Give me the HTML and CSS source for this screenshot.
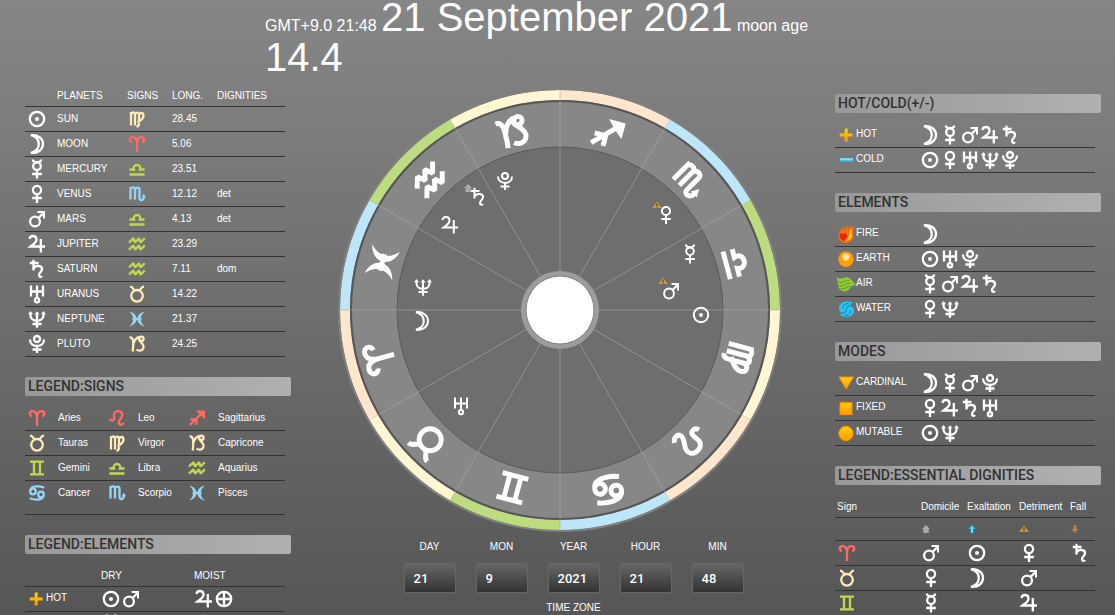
FILE: index.html
```html
<!DOCTYPE html>
<html lang="en">

<head>
  <meta charset="UTF-8" />
  <title>Horoscope</title>
  <link rel="stylesheet" href="styles.css">
</head>

<body>
  <!-- glyphs -->
  <svg class="defs" aria-hidden="true">
    <defs>
      <linearGradient id="gold" x1="0" y1="0" x2="0" y2="1">
        <stop offset="0" stop-color="#ffd000" />
        <stop offset="1" stop-color="#ff9a00" />
      </linearGradient>
    </defs>
    <symbol id="sun" viewBox="0 0 20 20"><circle cx="10" cy="10" r="7.2" /><circle class="solid" cx="10" cy="10" r="2" /></symbol>
    <symbol id="moon" viewBox="0 0 20 20"><path d="M4 1.2C11 .5 16 4.5 16 10S11 19.5 4 18.8C8.5 17.5 11.8 14.5 11.8 10S8.5 2.5 4 1.2Z" /></symbol>
    <symbol id="mercury" viewBox="0 0 20 20"><path d="M5.8 .5C6 4.2 14 4.2 14.2 .5M10 11V19.5M5.2 15H14.8" /><circle cx="10" cy="7.2" r="3.8" /></symbol>
    <symbol id="venus" viewBox="0 0 20 20"><circle cx="10" cy="6" r="4.1" /><path d="M10 10V19M5.2 14H14.8" /></symbol>
    <symbol id="mars" viewBox="0 0 20 20"><circle cx="8" cy="12.5" r="4.9" /><path d="M11.5 9L16 4.5" /><path class="solid" d="M10.5 2H18V9.5H16V5.5L14.5 4H10.5Z" /></symbol>
    <symbol id="jupiter" viewBox="0 0 20 20"><path d="M2.5 5C3 .8 9.5 1 9.5 5.5C9.5 9 6 10.500 3.5 12.5H18M13.8 5V18.5" /></symbol>
    <symbol id="saturn" viewBox="0 0 20 20"><path d="M6.5 .8V11.5M2.8 4H11.5M6.5 9.5C9 5.5 15.5 6.5 15 10.5C14.7 13 12 13.5 12 16C12 18.3 14.2 18.3 14.7 16.8" /></symbol>
    <symbol id="uranus" viewBox="0 0 20 20"><path d="M4 1.5V12.5M16 1.5V12.5M4 7.5H16M10 1.5V14" /><circle cx="10" cy="16.2" r="2.1" /></symbol>
    <symbol id="neptune" viewBox="0 0 20 20"><path d="M3.5 4V6.5C3.5 13.5 16.5 13.5 16.5 6.5V4M10 3.5V18.8M5.5 15H14.5" /><path class="solid" d="M1 5.2L3.5 2L6 5.200ZM7.5 5.500L10 2.300L12.5 5.500ZM14 5.200L16.5 2L19 5.200Z" /></symbol>
    <symbol id="pluto" viewBox="0 0 20 20"><circle cx="10" cy="5" r="3" /><path d="M3 5.5C3 14 17 14 17 5.5M10 12V19M5.5 15.5H14.5" /></symbol>
    <symbol id="earth" viewBox="0 0 20 20"><circle cx="10" cy="10" r="7.2" /><path d="M10 3V17M3 10H17" /></symbol>

    <symbol id="aries" viewBox="0 0 20 20"><path d="M5 8C1.8 7.5 2.2 3.2 5.500 3.2C9 3.2 10 6.5 10 10V18M10 10C10 6.5 11 3.2 14.5 3.2C17.8 3.2 18.2 7.5 15 8" /></symbol>
    <symbol id="taurus" viewBox="0 0 20 20"><circle cx="10" cy="11.8" r="5.8" /><path d="M3 2.6C5.8 2.6 5.600 5.200 8 6.200M17 2.6C14.2 2.6 14.400 5.200 12 6.200" /></symbol>
    <symbol id="gemini" viewBox="0 0 20 20"><path d="M3 3.6H17M3 16.4H17M7 4V16M13 4V16" /></symbol>
    <symbol id="cancer" viewBox="0 0 20 20"><circle cx="6" cy="8.5" r="2.8" /><circle cx="14" cy="11.5" r="2.8" /><path d="M3.5 7C4.5 2.5 12.5 2.8 17.3 4.8M16.5 13C15.5 17.5 7.5 17.2 2.7 15.2" /></symbol>
    <symbol id="leo" viewBox="0 0 20 20"><path d="M2.800 10.500C3.500 13.500 7 13.200 7.200 10.500C7.400 9 6.300 7.500 7.300 5.200C9.300 1.800 16 3 15.200 7.500C14.600 10.500 11.500 12 11.800 14.800C12.200 17.500 15.500 17 16.800 14.800" /></symbol>
    <symbol id="virgo" viewBox="0 0 20 20"><path d="M4 3V16.5M4 5C5 2.8 8 3 8 5.5V16.5M8 5.5C9 2.8 12 3 12 5.5V14.5Q12 17.5 9.5 17.5M12 6C13 3 16.5 3.5 16.5 6.5C16.5 10 13 12 10.5 13.5" /></symbol>
    <symbol id="libra" viewBox="0 0 20 20"><path d="M2.5 10.5H7C4.800 4.500 15.200 4.500 13 10.500H17.5M2.5 15.500H17.5" /></symbol>
    <symbol id="scorpio" viewBox="0 0 20 20"><path d="M3.5 3V15.5M3.5 5C4.5 2.8 8 3 8 5.5V15.5M8 5.5C9 2.8 12.5 3 12.5 5.5V14C12.5 17.3 16.5 17 16.8 13" /><path class="solid" d="M16.8 9.5L19 13.5H14.6Z" /></symbol>
    <symbol id="sagittarius" viewBox="0 0 20 20"><path d="M3 17L14 6M3.500 11.500H9.500V17" /><path class="solid" d="M9 2.5H18V11L14.8 8.5L11.5 5.2Z" /></symbol>
    <symbol id="capricorn" viewBox="0 0 20 20"><path d="M2.5 3.5C6 3 7 6 5.7 17.5M5.9 12C7 6 9.5 3.5 12.5 2.9M12.5 3C9 6 17.5 9 16.5 13.5C15.6 17.3 11.5 17.3 9.5 15.5" /><circle cx="14.4" cy="4.8" r="2.2" /></symbol>
    <symbol id="aquarius" viewBox="0 0 20 20"><path stroke-linejoin="bevel" d="M2 8.500L6.500 4.200L8 8.500L12 4.200L13.500 8.500L17.800 4.200M2 15.700L6.500 11.400L8 15.700L12 11.400L13.500 15.700L17.800 11.400" /></symbol>
    <symbol id="pisces" viewBox="0 0 20 20"><path d="M5.5 10H14.500" /><path class="solid" d="M2.200 2.5C12 4.500 12 15.500 2.200 17.500C7.500 13 7.500 7 2.200 2.500ZM17.800 2.5C8 4.500 8 15.500 17.800 17.500C12.500 13 12.500 7 17.800 2.500Z" /></symbol>

    <symbol id="hot" viewBox="0 0 20 20"><path fill="url(#gold)" stroke="none" d="M8.7 3.5h3v5h5v3h-5v5h-3v-5h-5v-3h5z" /></symbol>
    <symbol id="cold" viewBox="0 0 20 20"><path fill="#37c8f5" stroke="none" d="M4 8.5h13v3H4z" /><path fill="#c8f4ff" stroke="none" d="M4 8.5h13v1H4z" /></symbol>
    <symbol id="fire" viewBox="0 0 20 20"><path fill="#f8690c" stroke="none" d="M5.5 2.5L8.5 5L11 1.5L12.5 4.5L19 1C16.5 4 18 7 17.5 11.5C17 16.5 14 19 10 19C5.5 19 2.5 16 2.5 12C2.5 8 5.5 7 5.5 2.5Z" /><path fill="#ec2307" stroke="none" d="M4 9.5H10L11.5 12L8.5 17C4.5 15.5 3.5 13 4 9.5Z" /><path fill="#ffc928" stroke="none" d="M16.5 4C12.5 7 13.5 10 12.5 13C11.5 15.5 9.5 16.5 8.5 17C13.5 17.5 16.5 14 16 10.5C15.7 8 15.5 6 16.5 4Z" /></symbol>
    <symbol id="ground" viewBox="0 0 20 20"><circle cx="10" cy="10.2" r="7.7" fill="#ff9c08" stroke="none" /><circle cx="10" cy="8" r="3.500" fill="#ffe9a8" stroke="#ffc83c" stroke-width="1" /></symbol>
    <symbol id="air" viewBox="0 0 20 20"><path fill="#8fcb38" stroke="none" d="M.5 3C5 7 8 2 12 3.5C16 5 17 8.5 20 11C17.5 11.5 17 10.5 15.5 12C13 18 7 19 3.5 15C1.5 12 2 7 .5 3Z" /><path fill="none" stroke="#5a9a24" stroke-width="1" d="M2 7.5C6.5 11 9 5.5 13 6.5M2.5 11C7 14 10 8.5 14.5 9.5M4.5 14.8C9 16 11 12 14.5 12.5" /></symbol>
    <symbol id="water" viewBox="0 0 20 20"><path fill="#2cc2ef" stroke="none" d="M16.500 3.500C12 1.500 3 2.500 3 9.500C3 12 4.500 13.500 6 14C5.500 15 4.500 15.500 3.500 15.500C7 19 18 19.500 18 11.500C18 9 16.500 7.300 14.500 7C14.500 5.500 15 4.500 16.500 3.500Z" /><path fill="none" stroke="#0d83b8" stroke-width="1" d="M14.500 7C11.500 6.500 10.500 8 10.500 10.200S9 14.500 6 14M12.500 4.500C8.500 4.500 6.500 6.500 7 9.500M8.500 16.500C12.500 16.500 14.800 14.500 14.200 11.500" /></symbol>
    <symbol id="cardinal" viewBox="0 0 20 20"><path fill="url(#gold)" stroke="#ff8c00" stroke-width="1" d="M3 4H17.5L10.2 16Z" /></symbol>
    <symbol id="fixed" viewBox="0 0 20 20"><path fill="url(#gold)" stroke="#ff8c00" stroke-width="1" d="M4 4.5H16V16.5H4Z" /></symbol>
    <symbol id="mutable" viewBox="0 0 20 20"><circle cx="10" cy="10.5" r="7.2" fill="url(#gold)" stroke="#ff8c00" stroke-width="1" /></symbol>

    <symbol id="domicile" viewBox="0 0 10 10"><path fill="#aaa" stroke="none" d="M5 1L9 5H7.7V9H2.3V5H1Z" /></symbol>
    <symbol id="exaltation" viewBox="0 0 10 10"><path fill="#19c4ee" stroke="none" d="M5 1L8.7 5H6.3V9H3.7V5H1.3Z" /><path stroke="#c8f6ff" stroke-width="1" d="M5 3V8.5" /></symbol>
    <symbol id="detriment" viewBox="0 0 10 10"><path fill="#c8963c" stroke="none" d="M5 1.5L10 8H0Z" /><path stroke="#4c3a1c" stroke-width="1.2" d="M5 3.5V5.8M5 6.4V7.5" /></symbol>
    <symbol id="fall" viewBox="0 0 10 10"><path fill="#c97a3c" stroke="none" d="M5 9L1.3 5H3.7V1H6.3V5H8.7Z" /></symbol>
  </svg>

  <header class="title">
    <span class="small">GMT+9.0 21:48 </span>21 September 2021<span class="small"> moon age </span>14.4
  </header>

  <main class="page">
    <section class="side">
      <table class="planets">
        <thead>
          <tr><th class="c-icon"></th><th class="c-name">PLANETS</th><th class="c-sign">SIGNS</th><th class="c-long">LONG.</th><th>DIGNITIES</th></tr>
        </thead>
        <tbody>
          <tr><td><svg class="icon"><use href="#sun" /></svg></td><td>SUN</td><td><svg class="icon earthy"><use href="#virgo" /></svg></td><td>28.45</td><td></td></tr>
          <tr><td><svg class="icon"><use href="#moon" /></svg></td><td>MOON</td><td><svg class="icon fiery"><use href="#aries" /></svg></td><td>5.06</td><td></td></tr>
          <tr><td><svg class="icon"><use href="#mercury" /></svg></td><td>MERCURY</td><td><svg class="icon airy"><use href="#libra" /></svg></td><td>23.51</td><td></td></tr>
          <tr><td><svg class="icon"><use href="#venus" /></svg></td><td>VENUS</td><td><svg class="icon watery"><use href="#scorpio" /></svg></td><td>12.12</td><td>det</td></tr>
          <tr><td><svg class="icon"><use href="#mars" /></svg></td><td>MARS</td><td><svg class="icon airy"><use href="#libra" /></svg></td><td>4.13</td><td>det</td></tr>
          <tr><td><svg class="icon"><use href="#jupiter" /></svg></td><td>JUPITER</td><td><svg class="icon airy"><use href="#aquarius" /></svg></td><td>23.29</td><td></td></tr>
          <tr><td><svg class="icon"><use href="#saturn" /></svg></td><td>SATURN</td><td><svg class="icon airy"><use href="#aquarius" /></svg></td><td>7.11</td><td>dom</td></tr>
          <tr><td><svg class="icon"><use href="#uranus" /></svg></td><td>URANUS</td><td><svg class="icon earthy"><use href="#taurus" /></svg></td><td>14.22</td><td></td></tr>
          <tr><td><svg class="icon"><use href="#neptune" /></svg></td><td>NEPTUNE</td><td><svg class="icon watery"><use href="#pisces" /></svg></td><td>21.37</td><td></td></tr>
          <tr><td><svg class="icon"><use href="#pluto" /></svg></td><td>PLUTO</td><td><svg class="icon earthy"><use href="#capricorn" /></svg></td><td>24.25</td><td></td></tr>
        </tbody>
      </table>

      <h2>LEGEND:SIGNS</h2>
      <table class="signs">
        <tbody>
          <tr><td class="c-icon"><svg class="icon fiery"><use href="#aries" /></svg></td><td class="c-label">Aries</td><td class="c-icon"><svg class="icon fiery"><use href="#leo" /></svg></td><td class="c-label">Leo</td><td class="c-icon"><svg class="icon fiery"><use href="#sagittarius" /></svg></td><td>Sagittarius</td></tr>
          <tr><td><svg class="icon earthy"><use href="#taurus" /></svg></td><td>Tauras</td><td><svg class="icon earthy"><use href="#virgo" /></svg></td><td>Virgor</td><td><svg class="icon earthy"><use href="#capricorn" /></svg></td><td>Capricone</td></tr>
          <tr><td><svg class="icon airy"><use href="#gemini" /></svg></td><td>Gemini</td><td><svg class="icon airy"><use href="#libra" /></svg></td><td>Libra</td><td><svg class="icon airy"><use href="#aquarius" /></svg></td><td>Aquarius</td></tr>
          <tr class="last"><td><svg class="icon watery"><use href="#cancer" /></svg></td><td>Cancer</td><td><svg class="icon watery"><use href="#scorpio" /></svg></td><td>Scorpio</td><td><svg class="icon watery"><use href="#pisces" /></svg></td><td>Pisces</td></tr>
        </tbody>
      </table>

      <h2>LEGEND:ELEMENTS</h2>
      <table class="qualities">
        <thead>
          <tr><th class="c-kind"></th><th class="c-dry">DRY</th><th>MOIST</th></tr>
        </thead>
        <tbody>
          <tr><th><svg class="icon"><use href="#hot" /></svg>HOT</th><td><svg class="icon"><use href="#sun" /></svg><svg class="icon"><use href="#mars" /></svg></td><td><svg class="icon"><use href="#jupiter" /></svg><svg class="icon"><use href="#earth" /></svg></td></tr>
          <tr><th><svg class="icon"><use href="#cold" /></svg>COLD</th><td><svg class="icon"><use href="#mercury" /></svg><svg class="icon"><use href="#uranus" /></svg></td><td><svg class="icon"><use href="#venus" /></svg></td></tr>
        </tbody>
      </table>
    </section>

    <section class="center">
      <svg class="chart" viewBox="-222 -222 444 444" role="img" aria-label="Horoscope chart">
        <circle r="220.5" fill="#858585" />
        <g class="band">
          <circle r="215" pathLength="12" stroke="#fff7d4" stroke-dashoffset="0" />
          <circle r="215" pathLength="12" stroke="#ffe6cd" stroke-dashoffset="-1" />
          <circle r="215" pathLength="12" stroke="#bde7f9" stroke-dashoffset="-2" />
          <circle r="215" pathLength="12" stroke="#bcdc7f" stroke-dashoffset="-3" />
        </g>
        <circle class="halo" r="221" />
        <circle r="209" fill="#878787" stroke="#555" stroke-width="2" />
        <circle r="163" fill="#6e6e6e" stroke="#5a5a5a" />
        <path class="spokes" d="M0-39V-220M0 39V220M-39 0H-220M39 0H220M19.5-33.8L105-181.9M33.8-19.5L181.9-105M33.8 19.5L181.9 105M19.5 33.8L105 181.9M-19.5 33.8L-105 181.9M-33.8 19.5L-181.9 105M-33.8-19.5L-181.9-105M-19.5-33.8L-105-181.9" />
        <circle r="36.5" fill="#fff" stroke="#9c9c9c" stroke-width="5" />
        <circle r="34" fill="none" stroke="#808080" />
        <g class="zodiac">
          <use href="#libra" x="-19" y="-19" width="38" height="38" transform="rotate(75) translate(0 -183)" />
          <use href="#scorpio" x="-19" y="-19" width="38" height="38" transform="rotate(45) translate(0 -183)" />
          <use href="#sagittarius" x="-19" y="-19" width="38" height="38" transform="rotate(15) translate(0 -183)" />
          <use href="#capricorn" x="-19" y="-19" width="38" height="38" transform="rotate(-15) translate(0 -184)" />
          <use href="#aquarius" x="-19" y="-19" width="38" height="38" transform="rotate(-45) translate(0 -184)" />
          <use href="#pisces" x="-19" y="-19" width="38" height="38" transform="rotate(-75) translate(0 -184)" />
          <use href="#aries" x="-19" y="-19" width="38" height="38" transform="rotate(-105) translate(0 -187)" />
          <use href="#taurus" x="-19" y="-19" width="38" height="38" transform="rotate(-135) translate(0 -187)" />
          <use href="#gemini" x="-19" y="-19" width="38" height="38" transform="rotate(-165) translate(0 -184)" />
          <use href="#cancer" x="-19" y="-19" width="38" height="38" transform="rotate(165) translate(0 -186)" />
          <use href="#leo" x="-19" y="-19" width="38" height="38" transform="rotate(135) translate(0 -184)" />
          <use href="#virgo" x="-19" y="-19" width="38" height="38" transform="rotate(105) translate(0 -184)" />
        </g>
        <g class="bodies">
          <use href="#pluto" x="-65" y="-139" width="20" height="20" />
          <use href="#saturn" x="-92" y="-123" width="20" height="20" />
          <use href="#jupiter" x="-120" y="-95" width="20" height="20" />
          <use href="#neptune" x="-147" y="-33" width="20" height="20" />
          <use href="#moon" x="-148" y="1" width="20" height="20" />
          <use href="#uranus" x="-109" y="86" width="20" height="20" />
          <use href="#sun" x="131" y="-5" width="20" height="20" />
          <use href="#mars" x="101" y="-29" width="20" height="20" />
          <use href="#mercury" x="120" y="-66" width="20" height="20" />
          <use href="#venus" x="96" y="-105" width="20" height="20" />
          <use href="#domicile" x="-97" y="-127" width="10" height="10" />
          <use href="#detriment" x="92" y="-110" width="10" height="10" />
          <use href="#detriment" x="98" y="-34" width="10" height="10" />
        </g>
      </svg>

      <form class="date">
        <div class="fields">
          <label>DAY<input type="text" value="21"></label>
          <label>MON<input type="text" value="9"></label>
          <label>YEAR<input type="text" value="2021"></label>
          <label>HOUR<input type="text" value="21"></label>
          <label>MIN<input type="text" value="48"></label>
        </div>
        <label>TIME ZONE<select><option>+9.0</option></select></label>
      </form>
    </section>

    <section class="side right">
      <h2>HOT/COLD(+/-)</h2>
      <table class="groups">
        <tbody>
          <tr><th><svg class="icon"><use href="#hot" /></svg>HOT</th><td><svg class="icon"><use href="#moon" /></svg><svg class="icon"><use href="#mercury" /></svg><svg class="icon"><use href="#mars" /></svg><svg class="icon"><use href="#jupiter" /></svg><svg class="icon"><use href="#saturn" /></svg></td></tr>
          <tr><th><svg class="icon"><use href="#cold" /></svg>COLD</th><td><svg class="icon"><use href="#sun" /></svg><svg class="icon"><use href="#venus" /></svg><svg class="icon"><use href="#uranus" /></svg><svg class="icon"><use href="#neptune" /></svg><svg class="icon"><use href="#pluto" /></svg></td></tr>
        </tbody>
      </table>

      <h2>ELEMENTS</h2>
      <table class="groups">
        <tbody>
          <tr><th><svg class="icon"><use href="#fire" /></svg>FIRE</th><td><svg class="icon"><use href="#moon" /></svg></td></tr>
          <tr><th><svg class="icon"><use href="#ground" /></svg>EARTH</th><td><svg class="icon"><use href="#sun" /></svg><svg class="icon"><use href="#uranus" /></svg><svg class="icon"><use href="#pluto" /></svg></td></tr>
          <tr><th><svg class="icon"><use href="#air" /></svg>AIR</th><td><svg class="icon"><use href="#mercury" /></svg><svg class="icon"><use href="#mars" /></svg><svg class="icon"><use href="#jupiter" /></svg><svg class="icon"><use href="#saturn" /></svg></td></tr>
          <tr><th><svg class="icon"><use href="#water" /></svg>WATER</th><td><svg class="icon"><use href="#venus" /></svg><svg class="icon"><use href="#neptune" /></svg></td></tr>
        </tbody>
      </table>

      <h2>MODES</h2>
      <table class="groups">
        <tbody>
          <tr><th><svg class="icon"><use href="#cardinal" /></svg>CARDINAL</th><td><svg class="icon"><use href="#moon" /></svg><svg class="icon"><use href="#mercury" /></svg><svg class="icon"><use href="#mars" /></svg><svg class="icon"><use href="#pluto" /></svg></td></tr>
          <tr><th><svg class="icon"><use href="#fixed" /></svg>FIXED</th><td><svg class="icon"><use href="#venus" /></svg><svg class="icon"><use href="#jupiter" /></svg><svg class="icon"><use href="#saturn" /></svg><svg class="icon"><use href="#uranus" /></svg></td></tr>
          <tr><th><svg class="icon"><use href="#mutable" /></svg>MUTABLE</th><td><svg class="icon"><use href="#sun" /></svg><svg class="icon"><use href="#neptune" /></svg></td></tr>
        </tbody>
      </table>

      <h2>LEGEND:ESSENTIAL DIGNITIES</h2>
      <table class="dignities">
        <thead>
          <tr><th class="c-of">Sign</th><th class="c-dom">Domicile</th><th class="c-exa">Exaltation</th><th class="c-det">Detriment</th><th>Fall</th></tr>
          <tr><th></th><th><svg class="mark"><use href="#domicile" /></svg></th><th><svg class="mark"><use href="#exaltation" /></svg></th><th><svg class="mark"><use href="#detriment" /></svg></th><th><svg class="mark"><use href="#fall" /></svg></th></tr>
        </thead>
        <tbody>
          <tr><td><svg class="icon fiery"><use href="#aries" /></svg></td><td><svg class="icon"><use href="#mars" /></svg></td><td><svg class="icon"><use href="#sun" /></svg></td><td><svg class="icon"><use href="#venus" /></svg></td><td><svg class="icon"><use href="#saturn" /></svg></td></tr>
          <tr><td><svg class="icon earthy"><use href="#taurus" /></svg></td><td><svg class="icon"><use href="#venus" /></svg></td><td><svg class="icon"><use href="#moon" /></svg></td><td><svg class="icon"><use href="#mars" /></svg></td><td></td></tr>
          <tr><td><svg class="icon airy"><use href="#gemini" /></svg></td><td><svg class="icon"><use href="#mercury" /></svg></td><td></td><td><svg class="icon"><use href="#jupiter" /></svg></td><td></td></tr>
        </tbody>
      </table>
    </section>
  </main>
</body>

</html>
```

FILE: styles.css
```css
body {
  margin: 0;
  font-family: "Liberation Sans", Arial, sans-serif;
  font-size: 10px;
  color: #fff;
  background: linear-gradient(#868686, #565656) fixed;
}

.defs {
  display: block;
  width: 0;
  height: 0;
}

.title {
  margin: -3px 265px 7px;
  font-size: 40px;
  line-height: 40px;
}

.small {
  font-size: 16px;
  line-height: 16px;
}

.page {
  display: grid;
  grid-template-columns: 266px 1fr 266px;
  padding: 0 14px 0 25px;
}

.right {
  padding-top: 10px;
}

h2 {
  margin: 20px 0 10px;
  padding: 0 3px;
  font-family: Roboto, "Liberation Sans", sans-serif;
  font-size: 14px;
  font-weight: 500;
  line-height: 19px;
  color: #333;
  background: linear-gradient(to right, #999, #b0b0b0);
  border-radius: 2px;
}

.right h2:first-child {
  margin-top: 0;
}

/* tables */
table {
  width: 260px;
  table-layout: fixed;
  border-collapse: separate;
  border-spacing: 0;
}

th,
td {
  height: 22px;
  padding: 0 0 2px;
  border-bottom: 1px solid #333;
  font-weight: normal;
  text-align: left;
  white-space: nowrap;
}

thead th {
  height: 22px;
  padding: 0;
}

.last td {
  padding-bottom: 11px;
}

.icon {
  width: 20px;
  height: 20px;
  margin-bottom: -2px;
  vertical-align: middle;
}

.mark {
  display: block;
  width: 10px;
  height: 10px;
}

symbol {
  overflow: visible;
}

.icon,
.zodiac,
.bodies {
  fill: none;
  stroke: #fff;
  stroke-width: 2;
}

.icon {
  stroke-width: 2.3;
}

.zodiac {
  stroke-width: 2.6;
}

.solid {
  fill: var(--solid, #fff);
  stroke: none;
}

.fiery {
  stroke: #ff6b63;
  --solid: #ff6b63;
}

.earthy {
  stroke: #ffeab8;
  --solid: #ffeab8;
}

.airy {
  stroke: #c0d850;
  --solid: #c0d850;
}

.watery {
  stroke: #98d4f5;
  --solid: #98d4f5;
}

.planets .c-icon {
  width: 32px;
}

.planets .c-name {
  width: 70px;
}

.planets .c-sign,
.planets .c-long {
  width: 45px;
}

.planets td:first-child,
.signs td:first-child,
.dignities td:first-child {
  padding-left: 2px;
}

.groups th,
.qualities tbody th {
  padding-left: 1px;
}

.signs .c-icon {
  width: 31px;
}

.signs .c-label {
  width: 49px;
}

.qualities .c-kind {
  width: 76px;
}

.qualities .c-dry {
  width: 93px;
}

.groups th {
  width: 84px;
}

.dignities .c-of {
  width: 84px;
  padding-left: 2px;
}

.dignities .c-dom {
  width: 46px;
}

.dignities .c-exa {
  width: 52px;
}

.dignities .c-det {
  width: 51px;
}

/* chart */
.center {
  padding-right: 6px;
}

.chart {
  display: block;
  width: 444px;
  max-width: 100%;
  margin: 4px auto 0;
}

.band circle {
  fill: none;
  stroke-width: 10;
  stroke-dasharray: 1 3;
}

.halo {
  fill: none;
  stroke: #808080;
  stroke-width: 2;
}

.spokes {
  fill: none;
  stroke: #aaa;
  stroke-opacity: 0.6;
}

/* date form */
.date {
  display: flex;
  flex-direction: column;
  align-items: center;
  gap: 8px;
  padding: 8px 0 20px 27px;
}

.fields {
  display: flex;
  gap: 20px;
}

.date label {
  display: flex;
  flex-direction: column;
  align-items: center;
  gap: 9px;
  line-height: 14px;
}

input,
select {
  box-sizing: border-box;
  width: 52px;
  height: 30px;
  padding: 0 9px;
  border: 1px solid #666;
  border-radius: 2px;
  color: #fff;
  font-family: Roboto, "Liberation Sans", sans-serif;
  font-size: 13px;
  font-weight: 500;
  background: linear-gradient(#666, #333);
}

select {
  width: 90px;
}
```
